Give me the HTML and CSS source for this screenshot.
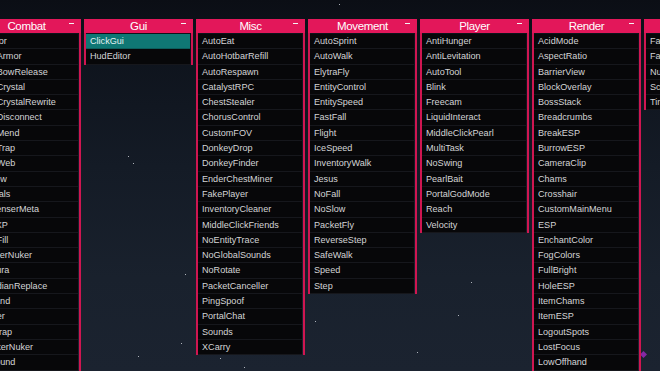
FILE: index.html
```html
<!DOCTYPE html>
<html>
<head>
<meta charset="utf-8">
<link rel="stylesheet" href="styles.css">
</head>
<body>
<div class="sky">
  <span class="star" style="left:128px;top:156px"></span>
  <span class="star" style="left:133px;top:163px"></span>
  <span class="star" style="left:185px;top:274px"></span>
  <span class="star" style="left:181px;top:343px"></span>
  <span class="star" style="left:138px;top:356px"></span>
  <span class="star" style="left:315px;top:321px"></span>
  <span class="star" style="left:220px;top:358px"></span>
  <span class="star" style="left:244px;top:367px"></span>
  <span class="star" style="left:417px;top:352px"></span>
  <span class="star" style="left:458px;top:315px"></span>
  <span class="star" style="left:471px;top:282px"></span>
  <span class="star" style="left:616px;top:62px"></span>
  <span class="star" style="left:339px;top:4px"></span>
  <div class="cross"></div>
  <div class="blip"></div>
</div>
<div class="board">
  <section class="panel">
    <div class="head">Combat<span class="min"></span></div>
    <ul class="list">
      <li>Anchor</li><li>AutoArmor</li><li>AutoBowRelease</li><li>AutoCrystal</li><li>AutoCrystalRewrite</li><li>AutoDisconnect</li><li>AutoMend</li><li>AutoTrap</li><li>AutoWeb</li><li>Burrow</li><li>Criticals</li><li>DispenserMeta</li><li>FastXP</li><li>HoleFill</li><li>HopperNuker</li><li>KillAura</li><li>ObsidianReplace</li><li>Offhand</li><li>Quiver</li><li>SelfTrap</li><li>ShulkerNuker</li><li>Surround</li><li>Trigger</li>
    </ul>
  </section>
  <section class="panel">
    <div class="head">Gui<span class="min"></span></div>
    <ul class="list">
      <li class="on">ClickGui</li><li>HudEditor</li>
    </ul>
  </section>
  <section class="panel">
    <div class="head">Misc<span class="min"></span></div>
    <ul class="list">
      <li>AutoEat</li><li>AutoHotbarRefill</li><li>AutoRespawn</li><li>CatalystRPC</li><li>ChestStealer</li><li>ChorusControl</li><li>CustomFOV</li><li>DonkeyDrop</li><li>DonkeyFinder</li><li>EnderChestMiner</li><li>FakePlayer</li><li>InventoryCleaner</li><li>MiddleClickFriends</li><li>NoEntityTrace</li><li>NoGlobalSounds</li><li>NoRotate</li><li>PacketCanceller</li><li>PingSpoof</li><li>PortalChat</li><li>Sounds</li><li>XCarry</li>
    </ul>
  </section>
  <section class="panel">
    <div class="head">Movement<span class="min"></span></div>
    <ul class="list">
      <li>AutoSprint</li><li>AutoWalk</li><li>ElytraFly</li><li>EntityControl</li><li>EntitySpeed</li><li>FastFall</li><li>Flight</li><li>IceSpeed</li><li>InventoryWalk</li><li>Jesus</li><li>NoFall</li><li>NoSlow</li><li>PacketFly</li><li>ReverseStep</li><li>SafeWalk</li><li>Speed</li><li>Step</li>
    </ul>
  </section>
  <section class="panel">
    <div class="head">Player<span class="min"></span></div>
    <ul class="list">
      <li>AntiHunger</li><li>AntiLevitation</li><li>AutoTool</li><li>Blink</li><li>Freecam</li><li>LiquidInteract</li><li>MiddleClickPearl</li><li>MultiTask</li><li>NoSwing</li><li>PearlBait</li><li>PortalGodMode</li><li>Reach</li><li>Velocity</li>
    </ul>
  </section>
  <section class="panel">
    <div class="head">Render<span class="min"></span></div>
    <ul class="list">
      <li>AcidMode</li><li>AspectRatio</li><li>BarrierView</li><li>BlockOverlay</li><li>BossStack</li><li>Breadcrumbs</li><li>BreakESP</li><li>BurrowESP</li><li>CameraClip</li><li>Chams</li><li>Crosshair</li><li>CustomMainMenu</li><li>ESP</li><li>EnchantColor</li><li>FogColors</li><li>FullBright</li><li>HoleESP</li><li>ItemChams</li><li>ItemESP</li><li>LogoutSpots</li><li>LostFocus</li><li>LowOffhand</li><li>Nametags</li>
    </ul>
  </section>
  <section class="panel">
    <div class="head">World<span class="min"></span></div>
    <ul class="list">
      <li>FastBreak</li><li>FastPlace</li><li>Nuker</li><li>Scaffold</li><li>Timer</li>
    </ul>
  </section>
</div>
</body>
</html>
```

FILE: styles.css
```css
html, body {
  margin: 0;
  padding: 0;
  width: 660px;
  height: 371px;
  overflow: hidden;
}
body {
  background: linear-gradient(180deg, #0b0e15 0%, #0e131c 12%, #141b26 45%, #19212d 75%, #1b2330 100%);
  font-family: "Liberation Sans", Arial, sans-serif;
  position: relative;
}
.sky {
  position: absolute;
  inset: 0;
}
.star {
  position: absolute;
  width: 1px;
  height: 1px;
  background: #c9ccd4;
  opacity: 0.85;
}
.cross {
  position: absolute;
  left: 366px;
  top: 263px;
  width: 10px;
  height: 10px;
}
.cross::before, .cross::after {
  content: "";
  position: absolute;
  background: #5c6470;
}
.cross::before { left: 4px; top: 0; width: 1px; height: 10px; }
.cross::after { left: 0; top: 4px; width: 10px; height: 1px; }
.blip {
  position: absolute;
  left: 641px;
  top: 352px;
  width: 5px;
  height: 5px;
  background: #a02ac0;
  transform: rotate(45deg);
  opacity: 0.8;
}
.board {
  position: relative;
  display: flex;
  gap: 3px;
  align-items: flex-start;
  padding-top: 19px;
  margin-left: -28px;
}
.panel {
  flex: 0 0 109px;
  width: 109px;
}
.head {
  position: relative;
  height: 14px;
  background: #e3175a;
  color: #ffffff;
  font-size: 11.5px;
  letter-spacing: -0.35px;
  line-height: 14px;
  text-align: center;
}
.min {
  position: absolute;
  right: 7px;
  top: 4px;
  width: 5px;
  height: 1px;
  background: #f4f4f4;
}
.list {
  list-style: none;
  margin: 0;
  padding: 1px 1px 0 0;
  border-left: 2px solid #cf1651;
  border-right: 2px solid #cf1651;
}
.list li {
  box-sizing: border-box;
  height: 15.3px;
  line-height: 14.5px;
  padding-left: 4px;
  background: #070709;
  border-bottom: 1px solid #16171c;
  color: #d4d4d6;
  font-size: 9.1px;
  white-space: nowrap;
  overflow: hidden;
}
.list li.on {
  background: #0f7774;
  border-bottom-color: #0b5e5c;
  color: #e6f2f2;
}
```
